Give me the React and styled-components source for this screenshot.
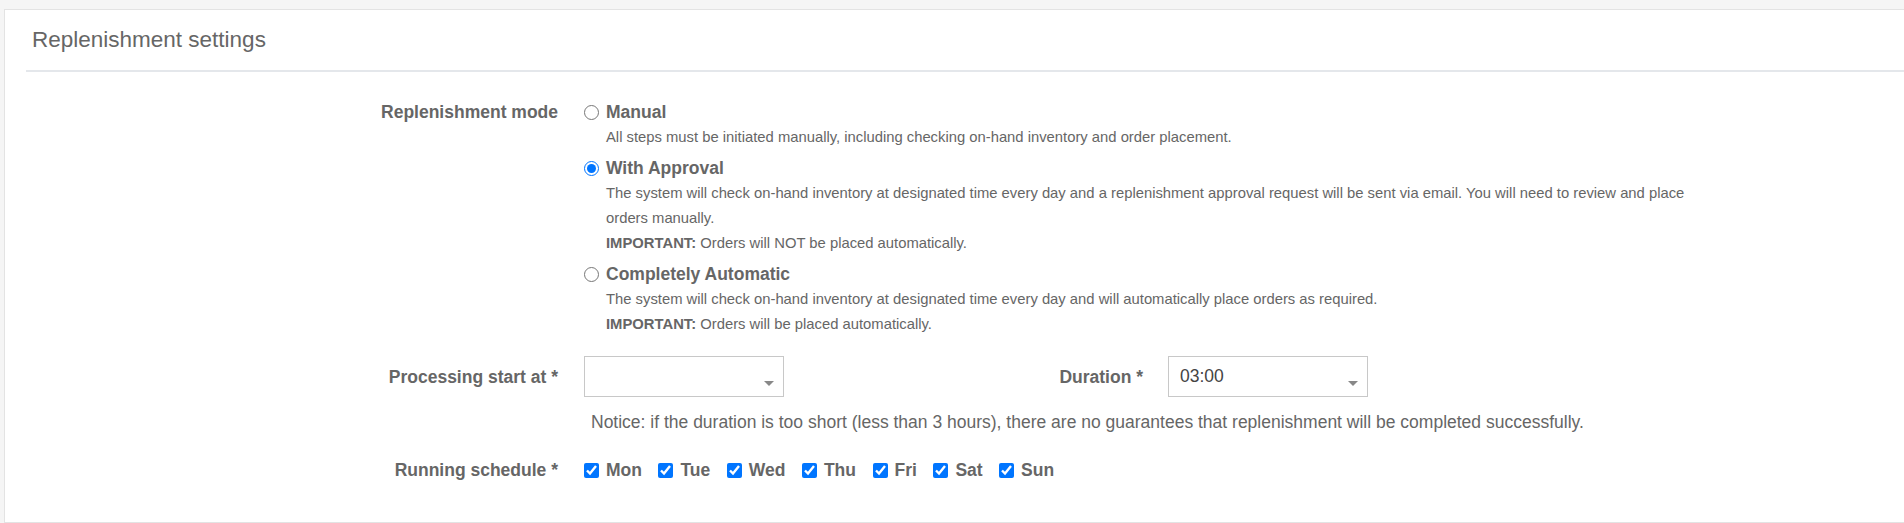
import React from "react";
import styled, { createGlobalStyle } from "styled-components";

const GlobalStyle = createGlobalStyle`
  html, body {
    margin: 0;
    padding: 0;
    background: #f5f5f5;
  }
  body {
    font-family: "Liberation Sans", Arial, sans-serif;
    color: #666;
    overflow: hidden;
  }
`;

const Page = styled.div`
  box-sizing: border-box;
  height: 523px;
  padding: 9px 0 0 4px;
  overflow: hidden;
`;

const Card = styled.section`
  box-sizing: border-box;
  height: 514px;
  margin-right: -40px;
  background: #fff;
  border: 1px solid #e3e3e3;
`;

const Header = styled.header`
  display: flex;
  align-items: center;
  height: 60px;
  margin-left: 21px;
  padding-left: 6px;
  border-bottom: 2px solid #e4e7eb;
`;

const Title = styled.h3`
  margin: 0;
  font-size: 22.5px;
  font-weight: 400;
  color: #666;
`;

const Body = styled.div`
  display: flex;
  flex-direction: column;
  padding-top: 27px;
`;

const Row = styled.div`
  display: grid;
  grid-template-columns: 553px 1fr;
  column-gap: 26px;
  align-items: ${({ $align }) => $align || "center"};
  margin-top: ${({ $top }) => $top || 0}px;
`;

const Label = styled.label`
  text-align: right;
  font-size: 17.5px;
  font-weight: 700;
  line-height: 26px;
  color: #666;
`;

const Options = styled.div`
  display: flex;
  flex-direction: column;
`;

const Option = styled.div`
  margin-bottom: 5px;
`;

const OptionHead = styled.label`
  display: flex;
  align-items: center;
  gap: 7px;
  font-size: 17.5px;
  font-weight: 700;
  line-height: 26px;
  color: #666;
`;

const Radio = styled.input.attrs({ type: "radio", name: "mode" })`
  width: 15px;
  height: 15px;
  margin: 0;
`;

const Desc = styled.div`
  max-width: 1100px;
  margin-left: 22px;
  font-size: 14.8px;
  line-height: 25px;
  color: #666;
`;

const Controls = styled.div`
  display: flex;
  align-items: center;
`;

const InlineLabel = styled(Label)`
  width: 359px;
  margin-right: 25px;
`;

const Select = styled.div`
  box-sizing: border-box;
  display: flex;
  align-items: center;
  width: 200px;
  height: 41px;
  padding: 0 9px 0 11px;
  border: 1px solid #c8c8c8;
  font-size: 17.5px;
  color: #444;
`;

const Arrow = styled.span`
  align-self: flex-end;
  margin: 0 0 10px auto;
  border-left: 5px solid transparent;
  border-right: 5px solid transparent;
  border-top: 5px solid #888;
`;

const Notice = styled.div`
  padding-left: 7px;
  font-size: 17.5px;
  line-height: 23px;
  color: #666;
`;

const Days = styled.div`
  display: flex;
  align-items: center;
  gap: 16.5px;
`;

const Day = styled.label`
  display: flex;
  align-items: center;
  gap: 7px;
  font-size: 17.5px;
  font-weight: 700;
  line-height: 25px;
  color: #666;
`;

const Check = styled.input.attrs({ type: "checkbox" })`
  width: 15px;
  height: 15px;
  margin: 0;
`;

const modes = [
  {
    title: "Manual",
    lines: [
      "All steps must be initiated manually, including checking on-hand inventory and order placement.",
    ],
  },
  {
    title: "With Approval",
    checked: true,
    lines: [
      "The system will check on-hand inventory at designated time every day and a replenishment approval request will be sent via email. You will need to review and place orders manually.",
    ],
    important: "Orders will NOT be placed automatically.",
  },
  {
    title: "Completely Automatic",
    lines: [
      "The system will check on-hand inventory at designated time every day and will automatically place orders as required.",
    ],
    important: "Orders will be placed automatically.",
  },
];

const days = ["Mon", "Tue", "Wed", "Thu", "Fri", "Sat", "Sun"];

export default function App() {
  return (
    <Page>
      <GlobalStyle />
      <Card>
        <Header>
          <Title>Replenishment settings</Title>
        </Header>
        <Body>
          <Row $align="start">
            <Label>Replenishment mode</Label>
            <Options>
              {modes.map((m) => (
                <Option key={m.title}>
                  <OptionHead>
                    <Radio defaultChecked={m.checked} />
                    {m.title}
                  </OptionHead>
                  {m.lines.map((l) => (
                    <Desc key={l}>{l}</Desc>
                  ))}
                  {m.important && (
                    <Desc>
                      <b>IMPORTANT:</b> {m.important}
                    </Desc>
                  )}
                </Option>
              ))}
            </Options>
          </Row>

          <Row $top={14}>
            <Label>Processing start at *</Label>
            <Controls>
              <Select>
                <Arrow />
              </Select>
              <InlineLabel>Duration *</InlineLabel>
              <Select>
                03:00
                <Arrow />
              </Select>
            </Controls>
          </Row>

          <Row $top={14}>
            <span />
            <Notice>
              Notice: if the duration is too short (less than 3 hours), there
              are no guarantees that replenishment will be completed
              successfully.
            </Notice>
          </Row>

          <Row $top={23}>
            <Label>Running schedule *</Label>
            <Days>
              {days.map((d) => (
                <Day key={d}>
                  <Check defaultChecked />
                  {d}
                </Day>
              ))}
            </Days>
          </Row>
        </Body>
      </Card>
    </Page>
  );
}
